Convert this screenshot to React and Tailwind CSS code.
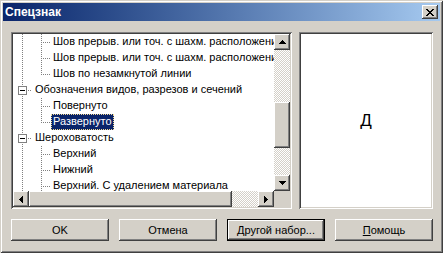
const raised = 'shadow-[inset_-1px_-1px_#404040,inset_1px_1px_#fff,inset_-2px_-2px_#808080,inset_2px_2px_#d4d0c8]'
const sunken = 'shadow-[inset_1px_1px_#808080,inset_-1px_-1px_#fff,inset_2px_2px_#404040,inset_-2px_-2px_#d4d0c8]'
const checker = 'bg-[image:repeating-conic-gradient(#d4d0c8_0_25%,#fff_0_50%)] bg-[length:2px_2px]'

function Arrow({ dir }) {
  const rows = [1, 3, 5, 7]
  if (dir === 'up' || dir === 'down') {
    return (
      <svg width="7" height="4" shapeRendering="crispEdges">
        {rows.map((w, i) => (
          <rect key={i} x={(7 - w) / 2} y={dir === 'up' ? i : 3 - i} width={w} height="1" fill="#000" />
        ))}
      </svg>
    )
  }
  return (
    <svg width="4" height="7" shapeRendering="crispEdges">
      {rows.map((h, i) => (
        <rect key={i} y={(7 - h) / 2} x={dir === 'left' ? i : 3 - i} height={h} width="1" fill="#000" />
      ))}
    </svg>
  )
}

function ScrollBtn({ dir }) {
  return (
    <div className={`w-4 h-4 shrink-0 bg-[#d4d0c8] flex items-center justify-center ${raised}`}>
      <Arrow dir={dir} />
    </div>
  )
}

// one 19px column of tree guide lines
function Guide({ up = true, down = true, right = false, box = false }) {
  const dot = { stroke: '#808080', strokeDasharray: '1 1' }
  return (
    <svg width="19" height="16" className="block shrink-0" shapeRendering="crispEdges">
      {box ? (
        <>
          <line x1="9.5" y1="0" x2="9.5" y2="4" {...dot} />
          {down && <line x1="9.5" y1="14" x2="9.5" y2="16" {...dot} />}
          <line x1="15" y1="8.5" x2="19" y2="8.5" {...dot} />
          <rect x="5.5" y="4.5" width="8" height="8" fill="#fff" stroke="#808080" />
          <line x1="7" y1="8.5" x2="12" y2="8.5" stroke="#000" />
        </>
      ) : (
        <>
          {up && <line x1="9.5" y1="0" x2="9.5" y2={down ? 16 : 9} {...dot} />}
          {right && <line x1="11" y1="8.5" x2="19" y2="8.5" {...dot} />}
        </>
      )}
    </svg>
  )
}

const rows = [
  { lvl: 1, text: 'Шов прерыв. или точ. с шахм. расположением' },
  { lvl: 1, text: 'Шов прерыв. или точ. с шахм. расположением' },
  { lvl: 1, text: 'Шов по незамкнутой линии', last: true },
  { lvl: 0, text: 'Обозначения видов, разрезов и сечений' },
  { lvl: 1, text: 'Повернуто' },
  { lvl: 1, text: 'Развернуто', last: true, sel: true },
  { lvl: 0, text: 'Шероховатость' },
  { lvl: 1, text: 'Верхний' },
  { lvl: 1, text: 'Нижний' },
  { lvl: 1, text: 'Верхний. С удалением материала' },
]

function TreeRow({ lvl, text, last, sel }) {
  return (
    <div className="flex h-4 items-center whitespace-nowrap">
      {lvl === 0 ? (
        <Guide box />
      ) : (
        <>
          <Guide />
          <Guide right down={!last} />
        </>
      )}
      <span
        className={`h-4 leading-[15px] px-[2px] ${lvl === 0 ? 'ml-px' : ''} ${
          sel ? 'bg-[#0a246a] text-white outline-1 outline-dotted outline-[#f5db95] -outline-offset-1' : ''
        }`}
      >
        {text}
      </span>
    </div>
  )
}

function Button({ children, def }) {
  return (
    <div
      className={`w-[98px] h-[22px] bg-[#d4d0c8] flex items-center justify-center ${raised} ${
        def ? 'border border-black' : ''
      }`}
    >
      {children}
    </div>
  )
}

export default function App() {
  return (
    <div className="w-[443px] h-[253px] bg-[#d4d0c8] p-[3px] flex flex-col shadow-[inset_1px_1px_#d4d0c8,inset_-1px_-1px_#404040,inset_2px_2px_#fff,inset_-2px_-2px_#808080] font-['Liberation_Sans',Arial,sans-serif] text-[11px] text-black overflow-hidden">
      <div className="h-[18px] shrink-0 flex items-center justify-between bg-linear-to-r from-[#0a246a] to-[#a6caf0] px-[2px]">
        <span className="font-bold text-white text-[12px] leading-none">Спецзнак</span>
        <div className={`w-4 h-[14px] bg-[#d4d0c8] flex items-center justify-center ${raised}`}>
          <svg width="8" height="7" shapeRendering="crispEdges">
            <path d="M0 0h2l2 2.5L6 0h2L5 3.5L8 7H6L4 4.5L2 7H0l3-3.5z" fill="#000" />
          </svg>
        </div>
      </div>

      <div className="flex gap-[7px] pl-[8px] pt-[11px]">
        <div className={`w-[281px] h-[177px] bg-[#d4d0c8] p-[2px] ${sunken}`}>
          <div className="flex h-[157px]">
            <div className="w-[261px] bg-white overflow-hidden">
              {rows.map((r, i) => (
                <TreeRow key={i} {...r} />
              ))}
            </div>
            <div className="w-4 flex flex-col">
              <ScrollBtn dir="up" />
              <div className={`flex-1 ${checker}`}>
                <div className={`mt-[52px] h-[46px] bg-[#d4d0c8] ${raised}`} />
              </div>
              <ScrollBtn dir="down" />
            </div>
          </div>
          <div className="flex h-4">
            <ScrollBtn dir="left" />
            <div className={`flex-1 flex ${checker}`}>
              <div className={`w-[203px] h-4 bg-[#d4d0c8] ${raised}`} />
            </div>
            <ScrollBtn dir="right" />
            <div className="w-4 h-4 bg-[#d4d0c8]" />
          </div>
        </div>

        <div className={`w-[134px] h-[177px] bg-white p-[2px] flex items-center justify-center ${sunken}`}>
          <span className="text-[17px] leading-none">Д</span>
        </div>
      </div>

      <div className="flex gap-[10px] pl-[8px] pt-[10px]">
        <Button>OK</Button>
        <Button>Отмена</Button>
        <Button def>
          <span>
            <span className="underline">Д</span>ругой набор...
          </span>
        </Button>
        <Button>
          <span>
            <span className="underline">П</span>омощь
          </span>
        </Button>
      </div>
    </div>
  )
}
